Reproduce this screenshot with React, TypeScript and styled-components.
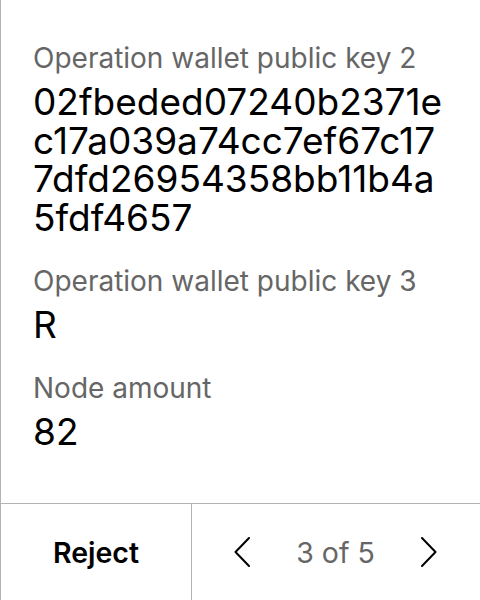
import React from "react";
import styled, { createGlobalStyle } from "styled-components";

const Global = createGlobalStyle`
  html, body { margin: 0; padding: 0; background: #fff; }
  body { font-family: Inter, "Noto Sans", sans-serif; }
`;

const Screen = styled.div`
  width: 480px;
  height: 600px;
  box-sizing: border-box;
  border-left: 1px solid #b3b3b3;
  display: flex;
  flex-direction: column;
  background: #fff;
`;

const Content = styled.div`
  flex: 1;
  padding: 41px 32px 0 32px;
  display: flex;
  flex-direction: column;
  gap: 26px;
`;

const Field = styled.div`
  display: flex;
  flex-direction: column;
  gap: 8px;
`;

const Label = styled.div`
  font-size: 28px;
  line-height: 34px;
  color: #666;
`;

const Value = styled.div`
  font-size: 37px;
  line-height: 38.7px;
  color: #000;
  word-break: break-all;
`;

const Footer = styled.div`
  height: 96px;
  border-top: 1px solid #b3b3b3;
  display: grid;
  grid-template-columns: 191px 1fr;
`;

const RejectButton = styled.button`
  all: unset;
  display: flex;
  align-items: center;
  justify-content: center;
  border-right: 1px solid #b3b3b3;
  font-family: Inter, sans-serif;
  font-weight: 600;
  font-size: 28.5px;
  color: #000;
`;

const Pager = styled.div`
  display: flex;
  align-items: center;
  justify-content: space-between;
  padding: 0 43px 0 42px;
`;

const NavButton = styled.button`
  all: unset;
  display: flex;
  align-items: center;
  justify-content: center;
  width: 16px;
  height: 32px;
`;

const PageText = styled.span`
  font-size: 28.5px;
  color: #666;
`;

const Chevron = ({ dir }: { dir: "left" | "right" }) => (
  <svg width="16" height="30" viewBox="0 0 16 30" fill="none">
    <path
      d={dir === "left" ? "M15 1 L1.5 15 L15 29" : "M1 1 L14.5 15 L1 29"}
      stroke="#000"
      strokeWidth="2"
      strokeLinecap="round"
      strokeLinejoin="round"
    />
  </svg>
);

const fields = [
  {
    label: "Operation wallet public key 2",
    value: "02fbeded07240b2371ec17a039a74cc7ef67c177dfd26954358bb11b4a5fdf4657",
  },
  { label: "Operation wallet public key 3", value: "R" },
  { label: "Node amount", value: "82" },
];

export default function App() {
  return (
    <>
      <Global />
      <Screen>
        <Content>
          {fields.map((f) => (
            <Field key={f.label}>
              <Label>{f.label}</Label>
              <Value>{f.value}</Value>
            </Field>
          ))}
        </Content>
        <Footer>
          <RejectButton>Reject</RejectButton>
          <Pager>
            <NavButton aria-label="Previous">
              <Chevron dir="left" />
            </NavButton>
            <PageText>3 of 5</PageText>
            <NavButton aria-label="Next">
              <Chevron dir="right" />
            </NavButton>
          </Pager>
        </Footer>
      </Screen>
    </>
  );
}
